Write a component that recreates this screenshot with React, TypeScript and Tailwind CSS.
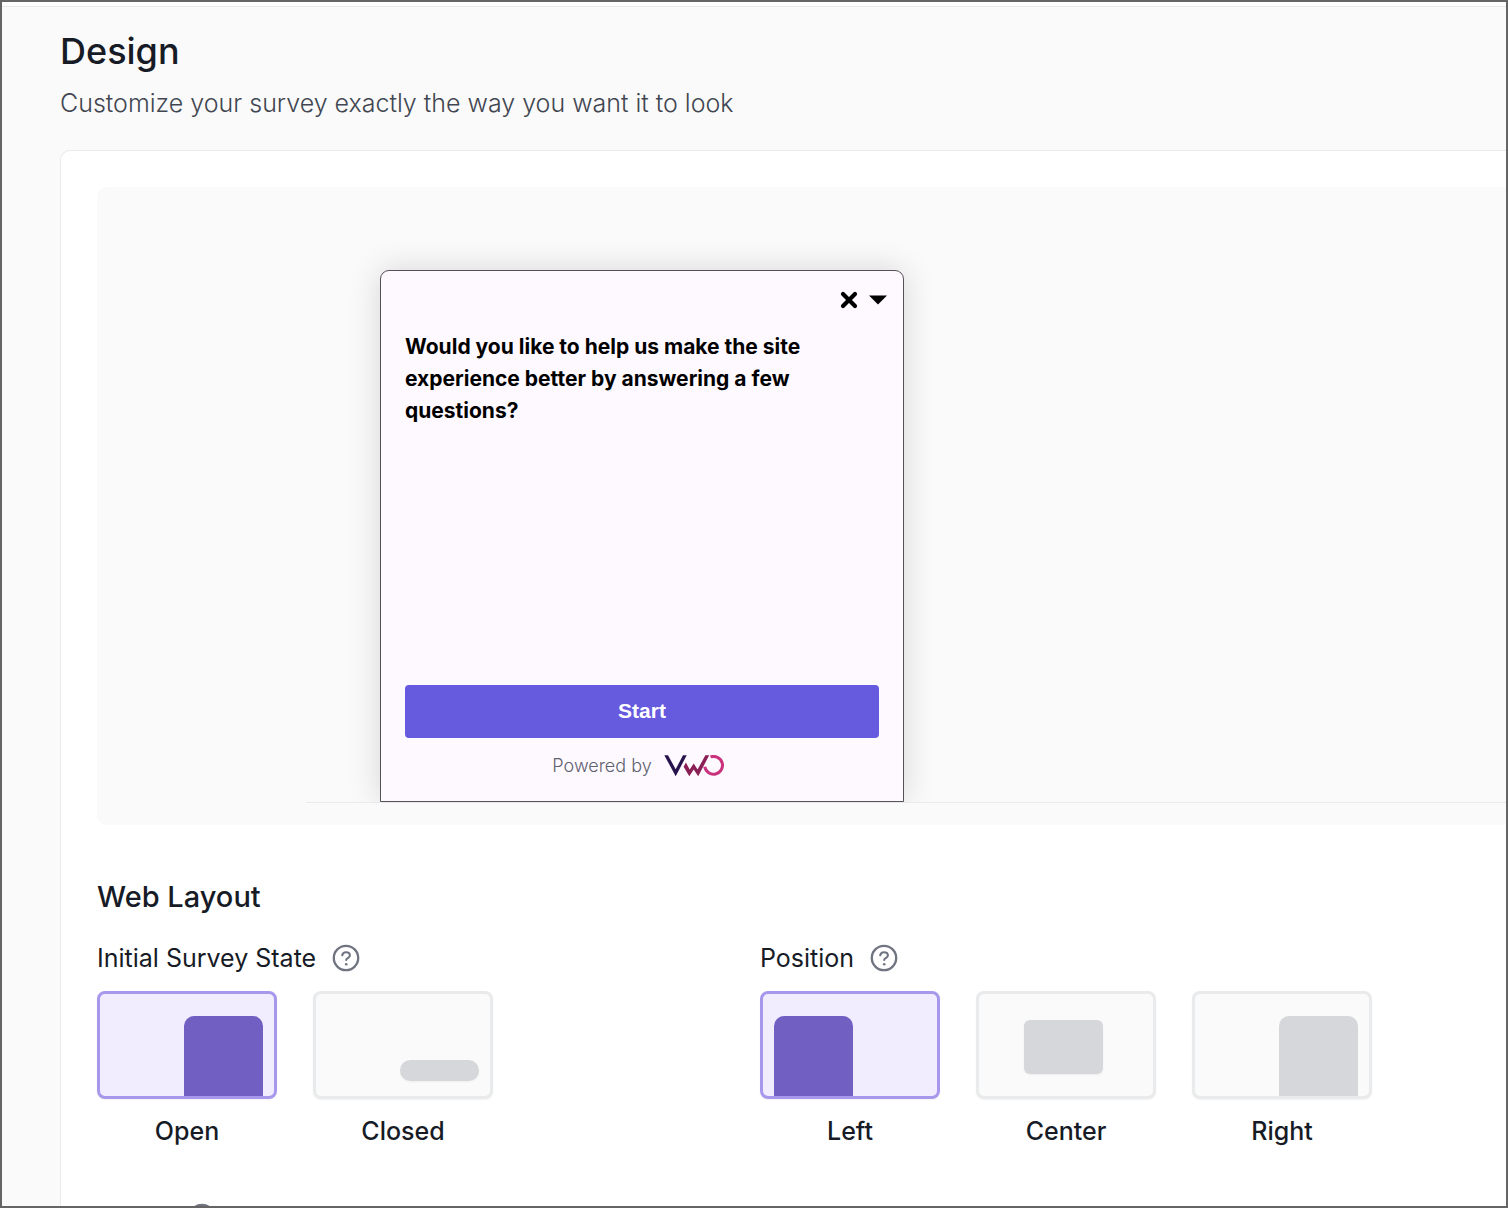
import { useState } from "react";

function HelpIcon() {
  return (
    <svg viewBox="0 0 28 28" className="size-7 shrink-0" fill="none" stroke="#6f7480" aria-hidden="true">
      <circle cx="14" cy="14" r="12.200" strokeWidth="2.300" />
      <path d="M10.200 11.300C10.600 9.400 12.100 8.300 14 8.300c2.200 0 3.900 1.300 3.900 3.200 0 2.500-3.700 2.700-3.700 4.400" strokeWidth="2.100" strokeLinecap="round" />
      <circle cx="14.200" cy="20.200" r="1.300" fill="#6f7480" stroke="none" />
    </svg>
  );
}

function HelpButton({ label }: { label: string }) {
  return (
    <button type="button" aria-label={label} className="flex">
      <HelpIcon />
    </button>
  );
}

function VwoLogo() {
  return (
    <svg viewBox="0 0 60 22" className="h-[22px] w-[60px]" aria-label="VWO" role="img">
      <path d="M0.300 0.200H4L11.700 14.300 19 0.200H22.700L11.700 21.300Z" fill="#26134d" />
      <path d="M19.600 11.800 21.900 7.600 25.700 14.400 29.700 8.600 33.600 14.400 41.400 0.200H45.200L34.200 21.300 29.700 14.600 25.300 21.300Z" fill="#8a1f55" />
      <path d="M46.500 1.950A8.900 8.900 0 1 1 40.800 11.800" fill="none" stroke="#c9337d" strokeWidth="3" />
    </svg>
  );
}

type Option = { name: string; align: string; shape: string };

const STATES: Option[] = [
  { name: "Open", align: "items-end justify-end", shape: "h-20 rounded-t-[10px]" },
  { name: "Closed", align: "items-end justify-end pb-[15px]", shape: "h-[21px] rounded-full shadow-xs" },
];

const POSITIONS: Option[] = [
  { name: "Left", align: "items-end justify-start", shape: "h-20 rounded-t-[10px]" },
  { name: "Center", align: "items-start justify-start pt-[26px] pl-[45px]", shape: "h-[54px] rounded-md shadow-xs" },
  { name: "Right", align: "items-end justify-end", shape: "h-20 rounded-t-[10px]" },
];

function OptionGroup({ title, options }: { title: string; options: Option[] }) {
  const [selected, setSelected] = useState(options[0].name);
  return (
    <div role="radiogroup" aria-label={title}>
      <div className="flex h-8 items-center gap-4">
        <span className="text-[25px] leading-8">{title}</span>
        <HelpButton label={`About ${title}`} />
      </div>
      <div className="mt-[17px] flex flex-wrap gap-9">
        {options.map((o) => {
          const on = o.name === selected;
          return (
            <label key={o.name} className="flex w-[180px] cursor-pointer flex-col items-center gap-4">
              <input
                type="radio"
                name={title}
                checked={on}
                onChange={() => setSelected(o.name)}
                className="sr-only"
              />
              <span
                className={`flex h-[108px] w-full rounded-lg border-3 px-[11px] shadow-xs ${o.align} ${
                  on ? "border-[#a898ec] bg-[#f1edff]" : "border-[#e9eaeb] bg-[#fafafa]"
                }`}
              >
                <span className={`w-[79px] ${o.shape} ${on ? "bg-[#715fc1]" : "bg-[#d5d7db]"}`} />
              </span>
              <span className="text-[25px] leading-8 font-medium">{o.name}</span>
            </label>
          );
        })}
      </div>
    </div>
  );
}

function SurveyWidget() {
  return (
    <section className="flex min-h-[532px] w-[524px] flex-col rounded-t-[9px] border border-[#555156] bg-[#fef9ff] px-6 pb-6 text-black shadow-[0_0_32px_rgba(0,0,0,0.15)]">
      <div className="-mr-2 mt-[19px] flex h-5 items-center justify-end gap-[11px]">
        <button type="button" aria-label="Close" className="flex">
          <svg viewBox="0 0 18 18" className="size-[18px]" stroke="black" strokeWidth="4.200" strokeLinecap="round">
            <path d="M3 3 15 15M15 3 3 15" />
          </svg>
        </button>
        <button type="button" aria-label="Minimize" className="flex">
          <svg viewBox="0 0 18 10" className="h-[10px] w-[18px]">
            <path d="M0 0.500h18L9 9.500Z" />
          </svg>
        </button>
      </div>
      <p className="mt-[21px] text-[21px] leading-8 font-bold">
        Would you like to help us make the site experience better by answering a few questions?
      </p>
      <button
        type="button"
        className="mt-auto h-[53px] shrink-0 rounded bg-[#665ade] pb-0.5 font-['Liberation_Sans',Arial,sans-serif] text-[21px] font-bold text-white"
      >
        Start
      </button>
      <div className="mt-[17px] flex h-[22px] items-center justify-center gap-3 pr-2">
        <span className="text-lg leading-[22px] font-[350] text-[#5d626e]">Powered by</span>
        <VwoLogo />
      </div>
    </section>
  );
}

export default function App() {
  return (
    <div className="flex h-screen flex-col overflow-hidden border-2 border-[#666566] bg-[#fafafa] font-[Inter,sans-serif] text-[#171b26]">
      <div className="h-[5px] shrink-0 border-b border-[#e9eaeb] bg-white" />
      <main className="flex grow flex-col pl-[58px]">
        <header className="pt-[22px] pb-[31px]">
          <h1 className="text-4xl leading-[44px] font-medium">Design</h1>
          <p className="mt-[14px] text-[25px] leading-8 font-[350] text-[#414651]">
            Customize your survey exactly the way you want it to look
          </p>
        </header>
        <div className="grow rounded-tl-[10px] border-t border-l border-[#e9eaeb] bg-white pt-9 pl-9">
          <div className="rounded-l-[10px] bg-[#fafafa] pb-[22px] pl-[209px]">
            <div className="overflow-hidden border-b border-[#e9eaeb] pt-[83px] pl-[74px]">
              <SurveyWidget />
            </div>
          </div>
          <h2 className="mt-[54px] text-[29px] leading-9 font-medium">Web Layout</h2>
          <div className="mt-[27px] grid grid-cols-[minmax(0,663px)_1fr]">
            <OptionGroup title="Initial Survey State" options={STATES} />
            <OptionGroup title="Position" options={POSITIONS} />
          </div>
          <div className="mt-14 pl-[91px]">
            <HelpButton label="Help" />
          </div>
        </div>
      </main>
    </div>
  );
}
